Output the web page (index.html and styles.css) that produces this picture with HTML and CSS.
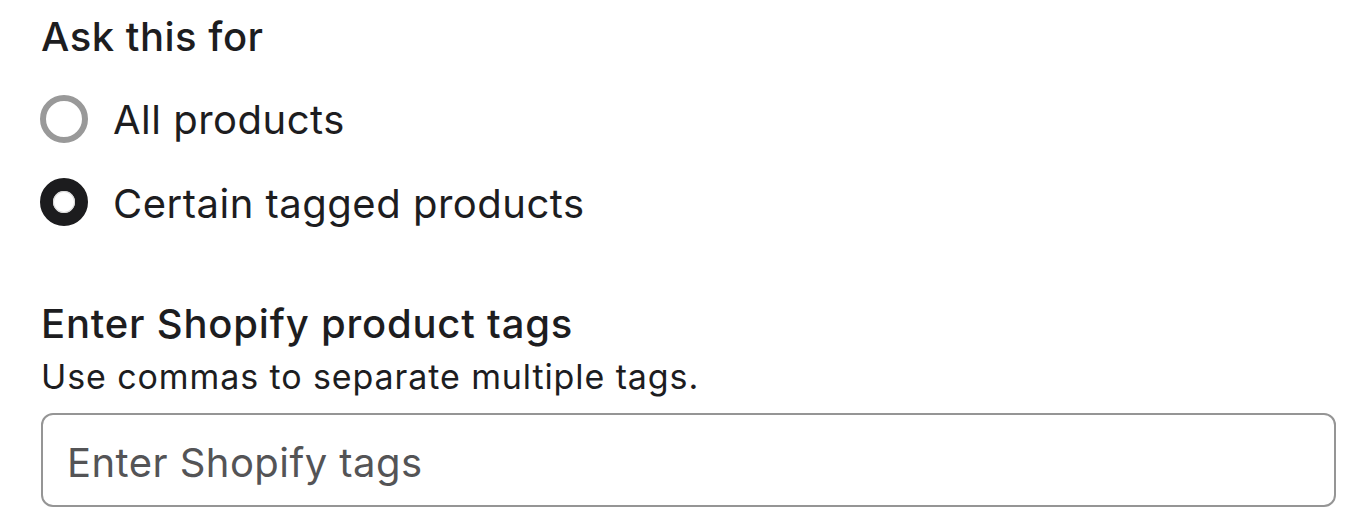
FILE: index.html
```html
<!DOCTYPE html>
<html lang="en">
<head>
<meta charset="utf-8">
<title>Ask this for</title>
<link rel="stylesheet" href="styles.css">
</head>
<body>
<main class="form">
  <div class="group" role="radiogroup">
    <div class="heading heading-ask">Ask this for</div>
    <label class="radio-row">
      <span class="radio"></span>
      <span class="radio-label">All products</span>
    </label>
    <label class="radio-row radio-row-checked">
      <span class="radio radio-checked"><span class="radio-dot"></span></span>
      <span class="radio-label">Certain tagged products</span>
    </label>
  </div>
  <section class="tags">
    <h2 class="heading tags-title">Enter Shopify product tags</h2>
    <p class="help">Use commas to separate multiple tags.</p>
    <div class="input"><span class="placeholder">Enter Shopify tags</span></div>
  </section>
</main>
</body>
</html>
```
FILE: styles.css
```css
html, body {
  margin: 0;
  padding: 0;
  background: #ffffff;
}
body {
  font-family: Inter, "Noto Sans", sans-serif;
  color: #1d1d1f;
  width: 1364px;
  height: 532px;
  overflow: hidden;
}
.form {
  display: flex;
  flex-direction: column;
  padding: 13px 0 0 41px;
  width: 1295px;
}
.group {
  display: flex;
  flex-direction: column;
  gap: 34px;
}
.heading {
  font-size: 40px;
  line-height: 48px;
  font-weight: 500;
  letter-spacing: 0.8px;
  margin: 0;
  padding: 0;
}
.heading-ask {
  letter-spacing: 0.5px;
  margin-bottom: 1px;
}
.radio-row {
  display: flex;
  align-items: center;
  gap: 25px;
  height: 48px;
}
.radio-row-checked .radio-label {
  padding-top: 3px;
}
.radio {
  box-sizing: border-box;
  width: 48px;
  height: 48px;
  border-radius: 50%;
  border: 6px solid #999999;
  flex: none;
  margin-left: -1px;
  margin-top: -3px;
}
.radio-checked {
  border: 13px solid #1c1c1e;
  display: flex;
  align-items: center;
  justify-content: center;
  margin-top: 0;
}
.radio-dot {
  width: 20px;
  height: 20px;
  border-radius: 50%;
  box-shadow: 0 0 0 1px #d8d8d8;
}
.radio-label {
  font-size: 40px;
  line-height: 48px;
  font-weight: 400;
  letter-spacing: 0.5px;
}
.tags {
  display: flex;
  flex-direction: column;
  margin-top: 74px;
}
.help {
  margin: 9px 0 0 0;
  font-size: 34px;
  line-height: 40px;
  letter-spacing: 0.9px;
}
.input {
  box-sizing: border-box;
  margin-top: 16px;
  height: 94px;
  border: 2.5px solid #959595;
  border-radius: 12px;
  display: flex;
  align-items: center;
  padding: 5px 0 0 24px;
}
.placeholder {
  font-size: 40px;
  line-height: 48px;
  color: #545456;
  letter-spacing: 0.45px;
}
```
